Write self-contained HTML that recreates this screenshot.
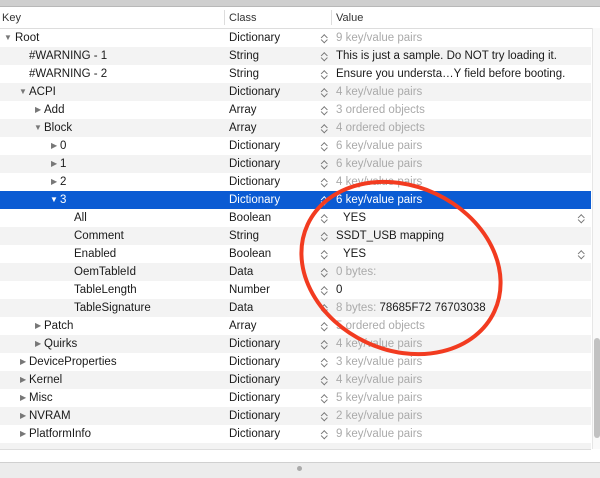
<!DOCTYPE html><html><head><style>
body{margin:0;width:600px;height:477px;overflow:hidden;background:#fff;font-family:"Liberation Sans",sans-serif;font-size:11.5px;color:#1a1a1a;position:relative}
.top{position:absolute;left:0;top:0;width:600px;height:6px;background:#cfcfcf;border-bottom:1px solid #b8b8b8}
.hdr{position:absolute;top:7px;left:0;width:592px;height:21px;border-bottom:1px solid #ddd;color:#333;font-size:11px}
.hdr span{position:absolute;top:5px}
.sep{position:absolute;top:3px;width:1px;height:15px;background:#ddd}
.row{position:absolute;left:0;width:591px;height:18px;line-height:18px}
.row.alt{background:#f3f3f3}
.row.sel{background:#0b5bd3;color:#fff}
.row span{position:absolute;top:0;white-space:nowrap}
.c{left:229px}.v{left:336px}.g{color:#aaa}.sel .g{color:#fff}
.row span.st{left:321px;top:4px;width:6px;height:11px}
.st::before,.st::after{content:"";position:absolute;left:1px;width:3.5px;height:3.5px;border-left:1.2px solid #777;border-top:1.2px solid #777}
.st::before{top:2px;transform:rotate(45deg)}
.st::after{top:5px;transform:rotate(-135deg)}
.sel .st::before,.sel .st::after{border-color:#fff}
.t{font-size:8px;color:#777}
.sel .t{color:#fff}
.bot{position:absolute;left:0;top:462px;width:600px;height:15px;background:#ececec;border-top:1px solid #d0d0d0}
.sb{position:absolute;left:592px;top:28px;width:8px;height:421px;background:#fafafa;border-left:1px solid #e6e6e6}
</style></head><body>
<div class="top"></div>
<div class="hdr"><span style="left:2px">Key</span><div class="sep" style="left:224px"></div><span style="left:229px">Class</span><div class="sep" style="left:331px"></div><span style="left:336px">Value</span></div>
<div class="row" style="top:29px"><span class="t" style="left:4px">▼</span><span style="left:15px">Root</span><span class="c">Dictionary</span><span class="st"></span><span class="v g">9 key/value pairs</span></div>
<div class="row alt" style="top:47px"><span style="left:29px">#WARNING - 1</span><span class="c">String</span><span class="st"></span><span class="v">This is just a sample. Do NOT try loading it.</span></div>
<div class="row" style="top:65px"><span style="left:29px">#WARNING - 2</span><span class="c">String</span><span class="st"></span><span class="v">Ensure you understa…Y field before booting.</span></div>
<div class="row alt" style="top:83px"><span class="t" style="left:19px">▼</span><span style="left:29px">ACPI</span><span class="c">Dictionary</span><span class="st"></span><span class="v g">4 key/value pairs</span></div>
<div class="row" style="top:101px"><span class="t" style="left:35px">▶</span><span style="left:44px">Add</span><span class="c">Array</span><span class="st"></span><span class="v g">3 ordered objects</span></div>
<div class="row alt" style="top:119px"><span class="t" style="left:34px">▼</span><span style="left:44px">Block</span><span class="c">Array</span><span class="st"></span><span class="v g">4 ordered objects</span></div>
<div class="row" style="top:137px"><span class="t" style="left:51px">▶</span><span style="left:60px">0</span><span class="c">Dictionary</span><span class="st"></span><span class="v g">6 key/value pairs</span></div>
<div class="row alt" style="top:155px"><span class="t" style="left:51px">▶</span><span style="left:60px">1</span><span class="c">Dictionary</span><span class="st"></span><span class="v g">6 key/value pairs</span></div>
<div class="row" style="top:173px"><span class="t" style="left:51px">▶</span><span style="left:60px">2</span><span class="c">Dictionary</span><span class="st"></span><span class="v g">4 key/value pairs</span></div>
<div class="row sel" style="top:191px"><span class="t" style="left:50px">▼</span><span style="left:60px">3</span><span class="c">Dictionary</span><span class="st"></span><span class="v g">6 key/value pairs</span></div>
<div class="row" style="top:209px"><span style="left:74px">All</span><span class="c">Boolean</span><span class="st"></span><span class="v" style="left:343px">YES</span><span class="st" style="left:578px"></span></div>
<div class="row alt" style="top:227px"><span style="left:74px">Comment</span><span class="c">String</span><span class="st"></span><span class="v">SSDT_USB mapping</span></div>
<div class="row" style="top:245px"><span style="left:74px">Enabled</span><span class="c">Boolean</span><span class="st"></span><span class="v" style="left:343px">YES</span><span class="st" style="left:578px"></span></div>
<div class="row alt" style="top:263px"><span style="left:74px">OemTableId</span><span class="c">Data</span><span class="st"></span><span class="v g">0 bytes:</span></div>
<div class="row" style="top:281px"><span style="left:74px">TableLength</span><span class="c">Number</span><span class="st"></span><span class="v">0</span></div>
<div class="row alt" style="top:299px"><span style="left:74px">TableSignature</span><span class="c">Data</span><span class="st"></span><span class="v"><span style="position:static;color:#aaa">8 bytes:</span> 78685F72 76703038</span></div>
<div class="row" style="top:317px"><span class="t" style="left:35px">▶</span><span style="left:44px">Patch</span><span class="c">Array</span><span class="st"></span><span class="v g">5 ordered objects</span></div>
<div class="row alt" style="top:335px"><span class="t" style="left:35px">▶</span><span style="left:44px">Quirks</span><span class="c">Dictionary</span><span class="st"></span><span class="v g">4 key/value pairs</span></div>
<div class="row" style="top:353px"><span class="t" style="left:20px">▶</span><span style="left:29px">DeviceProperties</span><span class="c">Dictionary</span><span class="st"></span><span class="v g">3 key/value pairs</span></div>
<div class="row alt" style="top:371px"><span class="t" style="left:20px">▶</span><span style="left:29px">Kernel</span><span class="c">Dictionary</span><span class="st"></span><span class="v g">4 key/value pairs</span></div>
<div class="row" style="top:389px"><span class="t" style="left:20px">▶</span><span style="left:29px">Misc</span><span class="c">Dictionary</span><span class="st"></span><span class="v g">5 key/value pairs</span></div>
<div class="row alt" style="top:407px"><span class="t" style="left:20px">▶</span><span style="left:29px">NVRAM</span><span class="c">Dictionary</span><span class="st"></span><span class="v g">2 key/value pairs</span></div>
<div class="row" style="top:425px"><span class="t" style="left:20px">▶</span><span style="left:29px">PlatformInfo</span><span class="c">Dictionary</span><span class="st"></span><span class="v g">9 key/value pairs</span></div>
<div style="position:absolute;left:0;top:443px;width:591px;height:6px;background:#f3f3f3;overflow:hidden;border-bottom:1px solid #ddd"></div>
<div class="sb"><div style="position:absolute;left:1px;top:310px;width:6px;height:100px;border-radius:3px;background:#c2c2c2"></div></div>
<div class="bot"><div style="position:absolute;left:297px;top:3px;width:5px;height:5px;border-radius:50%;background:#aaa"></div></div>
<svg style="position:absolute;left:0;top:0" width="600" height="477"><ellipse cx="401" cy="268" rx="103" ry="82" transform="rotate(25 401 268)" fill="none" stroke="#f23b20" stroke-width="4"/></svg>
</body></html>
